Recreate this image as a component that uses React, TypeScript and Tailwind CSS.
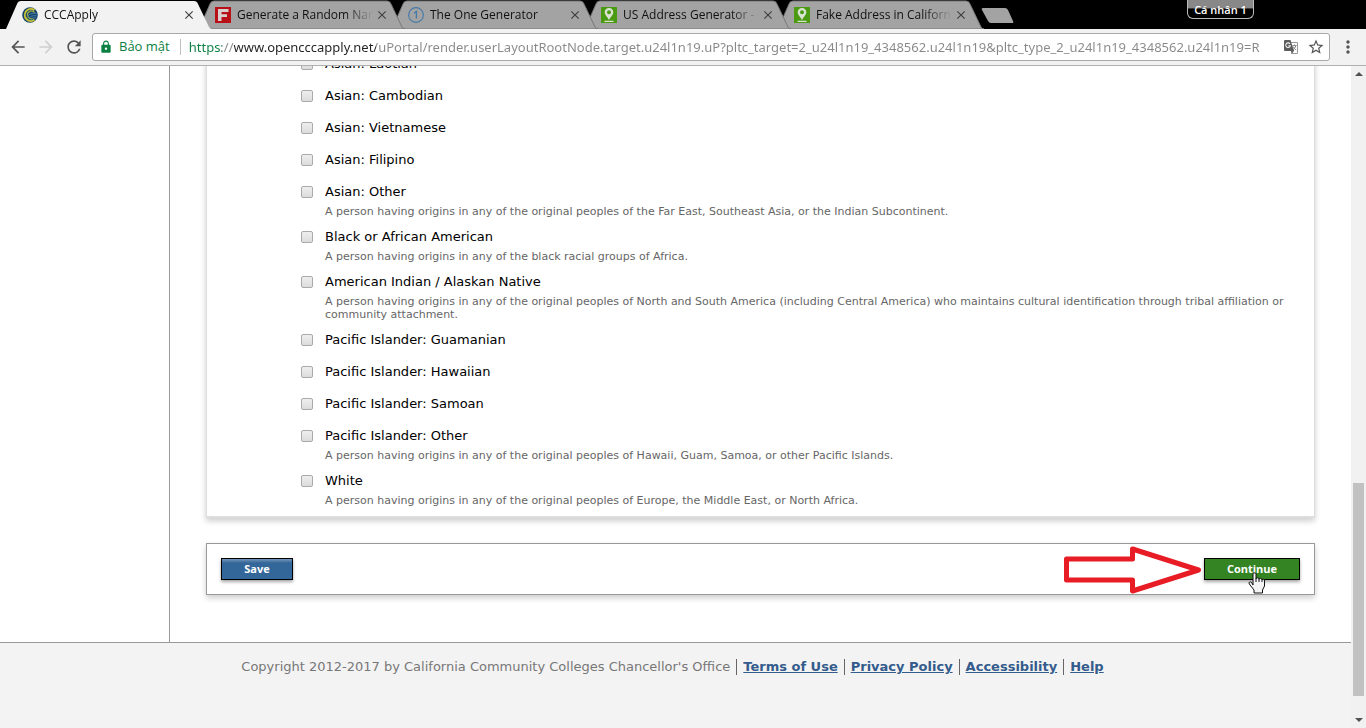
import type { ReactNode } from "react";
import {
  MdArrowBack,
  MdArrowForward,
  MdClose,
  MdLock,
  MdMoreVert,
  MdRefresh,
  MdStarBorder,
} from "react-icons/md";

function CollegeIcon() {
  return (
    <svg viewBox="0 0 16 16" className="size-4 shrink-0">
      <circle cx="8" cy="8" r="7.8" fill="#16436b" />
      <path d="M12.500 3.200A6 6 0 1 0 12.500 12.700" fill="none" stroke="#c5c234" strokeWidth="2" />
      <path d="M12.500 5.700A3.800 3.800 0 1 0 11 11.300" fill="none" stroke="#a3ad45" strokeWidth="1.200" />
      <path
        d="M5.500 9.500Q8 5.500 14.500 6.500M7 11.500Q9 8 14.500 8.800M9 12.500Q10.500 10.500 14 10.800"
        fill="none"
        stroke="#4a83a8"
        strokeWidth=".9"
      />
    </svg>
  );
}

function FIcon() {
  return (
    <svg viewBox="0 0 16 16" className="size-4 shrink-0">
      <path fill="#b90f16" d="M0 0h16v16H0z" />
      <path fill="#d8d0d0" d="M3 2h10.500v3H6.500v2.200H12v2.800H6.500V14H3z" />
    </svg>
  );
}

function OneIcon() {
  return (
    <svg viewBox="0 0 16 16" className="size-4 shrink-0" fill="none" stroke="#4379a8">
      <circle cx="8" cy="8" r="7.400" strokeWidth="1.100" />
      <path d="M6 6.200L8.400 4.500V11.500" strokeWidth="1.300" />
    </svg>
  );
}

function PinIcon() {
  return (
    <svg viewBox="0 0 16 16" className="size-4 shrink-0">
      <path fill="#4a9a12" d="M0 0h16v16H0z" />
      <path
        fill="#d9e3d2"
        fillRule="evenodd"
        d="M8 1C5.500 1 3.700 2.800 3.700 5.200C3.700 8 6.500 9.800 8 13C9.500 9.800 12.300 8 12.300 5.200C12.300 2.800 10.500 1 8 1zM8 3.300a2 2 0 1 1 0 4a2 2 0 0 1 0-4zM3.500 13.700h9V15h-9z"
      />
    </svg>
  );
}

function TranslateIcon() {
  return (
    <svg viewBox="0 0 16 16" className="size-4" fill="none">
      <path d="M7 3.500H14.500V14.500H8.500" stroke="#999999" />
      <path d="M9.500 6.500H13.500M11.500 5.500V6.500M13 6.500Q12 9.500 9.800 11M10.200 7.500Q11.500 10.500 13.200 11" stroke="#888888" />
      <path d="M2 1H7.500L11 12H2Q1 12 1 11V2Q1 1 2 1z" fill="#5c5c5c" />
      <path d="M8 12H11L8.500 15z" fill="#5c5c5c" />
      <path d="M7 4.900A2.300 2.300 0 1 0 7.300 6.800H5.300" stroke="#eeeeee" strokeWidth="1.100" />
    </svg>
  );
}

type TabItem = { title: string; icon: ReactNode; layer: string; active?: boolean };

const tabs: TabItem[] = [
  { title: "CCCApply", icon: <CollegeIcon />, layer: "z-50", active: true },
  { title: "Generate a Random Nam", icon: <FIcon />, layer: "z-40" },
  { title: "The One Generator", icon: <OneIcon />, layer: "z-30" },
  { title: "US Address Generator - F", icon: <PinIcon />, layer: "z-20" },
  { title: "Fake Address in Californi", icon: <PinIcon />, layer: "z-10" },
];

function Tab({ tab }: { tab: TabItem }) {
  return (
    <div className={`relative flex h-full w-[193px] shrink-0 items-center pt-px pl-[22px] ${tab.layer}`}>
      <svg viewBox="0 0 216 29" className="absolute top-0 left-0 h-[29px] w-[216px]">
        <path
          d="M6 29L17 4Q18 1 21 1H194Q197 1 198 4L209 27Q210 29 212 29z"
          fill={tab.active ? "#f2f2f2" : "#a3a3a3"}
          stroke={tab.active ? "none" : "#777777"}
          strokeWidth="1"
        />
      </svg>
      <button
        type="button"
        className="relative flex w-[156px] shrink-0 items-center gap-1.5 text-left text-xs whitespace-nowrap text-[#111111]"
      >
        {tab.icon}
        <span className="[mask-image:linear-gradient(to_right,black_108px,transparent_136px)]">{tab.title}</span>
      </button>
      <button type="button" aria-label={`Close ${tab.title}`} className="relative ml-1 shrink-0 text-[#404040]">
        <MdClose className="size-3.5" />
      </button>
    </div>
  );
}

const url =
  "https://www.opencccapply.net/uPortal/render.userLayoutRootNode.target.u24l1n19.uP?pltc_target=2_u24l1n19_4348562.u24l1n19&pltc_type_2_u24l1n19_4348562.u24l1n19=R";

function BrowserChrome() {
  return (
    <header className="shrink-0 font-['Open_Sans','Noto_Sans',sans-serif]">
      <div className="flex h-[29px] bg-black">
        {tabs.map((tab) => (
          <Tab key={tab.title} tab={tab} />
        ))}
        <button type="button" aria-label="New tab" className="mt-2 ml-4 h-4 shrink-0">
          <svg viewBox="0 0 34 16" className="h-4 w-[34px]">
            <path d="M2 0H24Q26 0 27 2L32 13Q33 15 31 15H10Q8 15 7 13L1 2Q0 0 2 0z" fill="#a3a3a3" />
          </svg>
        </button>
        <button
          type="button"
          className="mr-28 ml-auto h-[19px] w-[67px] shrink-0 rounded-b-md border border-t-0 border-[#bbbbbb] bg-linear-to-b from-[#888888] from-45% to-black to-50% text-[11px] leading-[17px] font-semibold text-white"
        >
          Cá nhân 1
        </button>
      </div>
      <div className="flex h-[37px] items-center border-b border-[#b0b0b0] bg-[#f2f2f2] pr-2 pl-2 text-[#555555]">
        <button type="button" aria-label="Back">
          <MdArrowBack className="size-5" />
        </button>
        <button type="button" aria-label="Forward" className="ml-2 text-[#d0d0d0]">
          <MdArrowForward className="size-5" />
        </button>
        <button type="button" aria-label="Reload" className="ml-2">
          <MdRefresh className="size-5" />
        </button>
        <div className="ml-2 flex h-7 min-w-0 flex-1 items-center rounded-[3px] border border-[#a8a8a8] bg-white pr-1 pl-1.5">
          <MdLock className="size-3.5 shrink-0 text-[#0b8043]" />
          <span className="ml-1.5 shrink-0 text-[13px] text-[#0b8043]">Bảo mật</span>
          <span className="mr-2 ml-2.5 h-4 w-px shrink-0 bg-[#c0c0c0]" />
          <input
            aria-label="Address"
            defaultValue={url}
            spellCheck={false}
            className="min-w-0 flex-1 bg-linear-[to_right,#0b8043_33px,#888888_33px,#888888_45px,#222222_45px,#222222_187px,#888888_187px] bg-clip-text pt-px font-['Noto_Sans',sans-serif] text-[13px] text-transparent outline-none"
          />
          <button type="button" aria-label="Translate" className="ml-2 shrink-0">
            <TranslateIcon />
          </button>
          <button type="button" aria-label="Bookmark" className="ml-2 shrink-0">
            <MdStarBorder className="size-[18px]" />
          </button>
        </div>
        <button type="button" aria-label="Menu" className="ml-2">
          <MdMoreVert className="size-5" />
        </button>
      </div>
    </header>
  );
}

const options: { label: string; hint?: string }[] = [
  { label: "Asian: Laotian" },
  { label: "Asian: Cambodian" },
  { label: "Asian: Vietnamese" },
  { label: "Asian: Filipino" },
  {
    label: "Asian: Other",
    hint: "A person having origins in any of the original peoples of the Far East, Southeast Asia, or the Indian Subcontinent.",
  },
  {
    label: "Black or African American",
    hint: "A person having origins in any of the black racial groups of Africa.",
  },
  {
    label: "American Indian / Alaskan Native",
    hint: "A person having origins in any of the original peoples of North and South America (including Central America) who maintains cultural identification through tribal affiliation or community attachment.",
  },
  { label: "Pacific Islander: Guamanian" },
  { label: "Pacific Islander: Hawaiian" },
  { label: "Pacific Islander: Samoan" },
  {
    label: "Pacific Islander: Other",
    hint: "A person having origins in any of the original peoples of Hawaii, Guam, Samoa, or other Pacific Islands.",
  },
  {
    label: "White",
    hint: "A person having origins in any of the original peoples of Europe, the Middle East, or North Africa.",
  },
];

function Options() {
  return (
    <ul className="-mt-3 pr-4 pl-[94px]">
      {options.map(({ label, hint }, i) => (
        <li key={label} className={hint ? "pb-[9px]" : "pb-3"}>
          <div className="flex h-5 items-center">
            <input
              id={`race-${i}`}
              type="checkbox"
              className="size-3 appearance-none rounded-xs border border-[#aaaaaa] bg-linear-to-b from-[#eeeeee] to-[#dcdcdc] checked:bg-[#336699]"
            />
            <label htmlFor={`race-${i}`} className="pl-3 text-[13px] leading-5 text-black">
              {label}
            </label>
          </div>
          {hint && <p className="mt-[3px] pl-6 text-[11px] leading-[13px] text-[#666666]">{hint}</p>}
        </li>
      ))}
    </ul>
  );
}

function Actions() {
  return (
    <div className="mt-[25px] flex items-center justify-between border border-[#999999] bg-white p-3.5 shadow-[0_3px_6px_rgba(0,0,0,0.2)]">
      <button
        type="button"
        className="h-[22px] w-[72px] border border-black bg-linear-to-b from-[#7395b8] to-[#336699] to-20% font-['Open_Sans','Noto_Sans',sans-serif] text-[11px] leading-5 font-bold text-white shadow-[0_2px_3px_rgba(0,0,0,0.35)]"
      >
        Save
      </button>
      <div className="relative">
        <svg
          viewBox="0 0 138 48"
          className="absolute top-[-12px] right-full mr-0.5 h-12 w-[138px]"
          fill="none"
          stroke="#e81c25"
          strokeWidth="5"
          strokeLinejoin="round"
        >
          <path d="M2.500 13H68.500V3L134.500 24L68.500 45V34H2.500z" />
        </svg>
        <button
          type="button"
          className="block h-[22px] w-24 border border-black bg-[#348423] font-['Open_Sans','Noto_Sans',sans-serif] text-[11px] leading-5 font-bold text-white shadow-[0_2px_3px_rgba(0,0,0,0.35)]"
        >
          Continue
        </button>
        <svg viewBox="0 0 18 22" className="absolute top-3.5 left-11 h-[22px] w-[18px]">
          <path
            d="M5 13V2Q5 .8 6.500 .8T8 2V7Q8 5.800 9.500 5.800T11 7.500Q11 6.400 12.500 6.400T14 8Q14 7.200 15.300 7.200T16.500 9V14L14.500 18V21H6V18L1.300 12Q.6 10.700 1.600 10T4 11z"
            fill="#f4f4f4"
            stroke="#111111"
            strokeWidth="1"
          />
          <path d="M8 7V10M11 7.500V10M14 8V10" stroke="#111111" strokeWidth="1" />
        </svg>
      </div>
    </div>
  );
}

const footerLinks = ["Terms of Use", "Privacy Policy", "Accessibility", "Help"];

function Footer() {
  return (
    <footer className="flex-1 border-t border-[#999999] bg-[#f3f3f3] pt-4 pr-1.5 text-[13px] leading-4 text-[#777777]">
      <div className="flex justify-center">
        <span>Copyright 2012-2017 by California Community Colleges Chancellor's Office</span>
        {footerLinks.map((link) => (
          <span key={link} className="ml-1.5 border-l border-[#666666] pl-1.5">
            <a href="#" className="font-bold text-[#335b8c] underline">
              {link}
            </a>
          </span>
        ))}
      </div>
    </footer>
  );
}

function Scrollbar() {
  return (
    <div className="flex w-[15px] shrink-0 flex-col items-center bg-[#f1f1f1] py-1.5">
      <svg viewBox="0 0 8 4" className="h-1 w-2">
        <path d="M0 4L4 0L8 4z" fill="#505050" />
      </svg>
      <div className="flex-1" />
      <div className="mb-[22px] h-[213px] w-[11px] bg-[#c1c1c1]" />
      <svg viewBox="0 0 8 4" className="h-1 w-2">
        <path d="M0 0L4 4L8 0z" fill="#505050" />
      </svg>
    </div>
  );
}

export default function App() {
  return (
    <div className="flex h-screen flex-col bg-white">
      <BrowserChrome />
      <div className="flex min-h-0 flex-1 overflow-hidden font-['DejaVu_Sans',sans-serif]">
        <div className="flex min-w-0 flex-1 flex-col">
          <div className="flex">
            <aside className="w-[170px] shrink-0 border-r border-[#999999]" />
            <main className="min-w-0 flex-1 overflow-hidden px-9 pb-[47px]">
              <section className="border border-t-0 border-b-2 border-[#dddddd] shadow-[0_3px_6px_rgba(0,0,0,0.2)]">
                <Options />
              </section>
              <Actions />
            </main>
          </div>
          <Footer />
        </div>
        <Scrollbar />
      </div>
    </div>
  );
}
